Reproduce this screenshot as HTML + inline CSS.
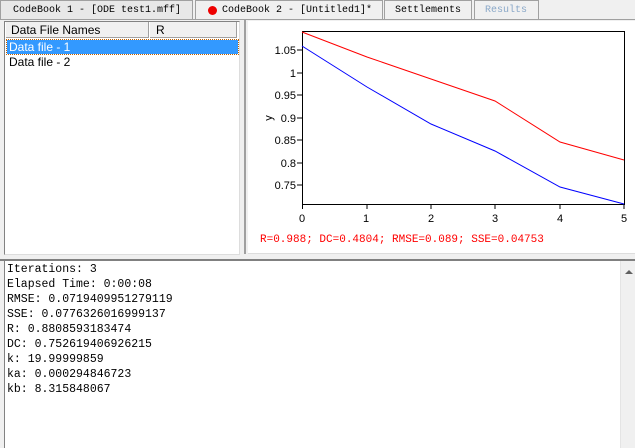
<!DOCTYPE html><html><head><style>
body{margin:0;width:635px;height:448px;background:#f0f0f0;position:relative;overflow:hidden;font-family:"Liberation Sans",sans-serif}
.a{position:absolute}
.tab{position:absolute;top:0;height:19px;border:1px solid #a0a0a0;border-bottom:none;background:#f0f0f0;font:10px "Liberation Mono",monospace;line-height:19px;white-space:nowrap;box-sizing:border-box}
.m{font:11.5px "Liberation Mono",monospace;line-height:15px;white-space:pre}
</style></head><body>
<div class="a" style="left:0;top:19px;width:635px;height:1px;background:#a0a0a0"></div>
<div class="tab" style="left:0;width:193px;background:#e8e8e8;padding-left:12px">CodeBook 1 - [ODE test1.mff]</div>
<div class="tab" style="left:195px;width:188px;padding-left:26px"><span style="position:absolute;left:12px;top:5px;width:9px;height:9px;border-radius:50%;background:#e00"></span>CodeBook 2 - [Untitled1]*</div>
<div class="tab" style="left:384px;width:88px;padding-left:10px">Settlements</div>
<div class="tab" style="left:474px;width:65px;color:#8aa8c8;padding-left:10px">Results</div>
<!-- left panel -->
<div class="a" style="left:4px;top:21px;width:234px;height:232px;background:#fff;border:1px solid #828282;border-right-color:#ddd;border-bottom-color:#ddd"></div>
<div class="a" style="left:6px;top:22px;width:143px;height:16px;background:#f0f0f0;border-right:1px solid #a0a0a0;border-bottom:1px solid #a0a0a0;font-size:12px;line-height:16px;padding-left:5px;box-sizing:border-box">Data File Names</div>
<div class="a" style="left:150px;top:22px;width:87px;height:16px;background:#f0f0f0;border-right:1px solid #a0a0a0;border-bottom:1px solid #a0a0a0;font-size:12px;line-height:16px;padding-left:6px;box-sizing:border-box">R</div>
<div class="a" style="left:7px;top:40px;width:231px;height:14px;background:#3399ff;color:#fff;font-size:12px;line-height:14px;padding-left:2px;box-sizing:border-box;outline:1px dotted #c06000">Data file - 1</div>
<div class="a" style="left:9px;top:55px;font-size:12px;line-height:14px">Data file - 2</div>
<!-- right panel -->
<div class="a" style="left:244px;top:20px;width:391px;height:234px;border-left:2px solid #a0a0a0;box-sizing:border-box"></div>
<div class="a" style="left:248px;top:21px;width:387px;height:232px;background:#fff;border-bottom:1px solid #ddd"></div>
<svg class="a" style="left:0;top:0" width="635" height="260" font-family="Liberation Sans,sans-serif" font-size="11">
<rect x="302.5" y="31.5" width="322" height="173" fill="none" stroke="#000"/>
<g stroke="#000">
<line x1="297" y1="50" x2="302" y2="50"/><line x1="297" y1="73" x2="302" y2="73"/><line x1="297" y1="95" x2="302" y2="95"/><line x1="297" y1="118" x2="302" y2="118"/><line x1="297" y1="140" x2="302" y2="140"/><line x1="297" y1="163" x2="302" y2="163"/><line x1="297" y1="185" x2="302" y2="185"/>
<line x1="302.5" y1="205" x2="302.5" y2="209"/><line x1="367" y1="205" x2="367" y2="209"/><line x1="431" y1="205" x2="431" y2="209"/><line x1="495" y1="205" x2="495" y2="209"/><line x1="560" y1="205" x2="560" y2="209"/><line x1="624" y1="205" x2="624" y2="209"/>
</g>
<g text-anchor="end"><text x="296" y="54">1.05</text><text x="296" y="77">1</text><text x="296" y="99">0.95</text><text x="296" y="122">0.9</text><text x="296" y="144">0.85</text><text x="296" y="167">0.8</text><text x="296" y="189">0.75</text></g>
<g text-anchor="middle"><text x="302" y="222">0</text><text x="366" y="222">1</text><text x="431" y="222">2</text><text x="495" y="222">3</text><text x="560" y="222">4</text><text x="624" y="222">5</text></g>
<text x="268" y="122" transform="rotate(-90 268 118)" text-anchor="middle">y</text>
<polyline fill="none" stroke="#f00" points="302,32 367,57 431,79 495,101 560,142 624,160"/>
<polyline fill="none" stroke="#00f" points="302,46 367,87 431,124 495,151 560,187 624,204"/>
<text x="260" y="242" fill="#f00" font-family="Liberation Mono,monospace" font-size="11">R=0.988; DC=0.4804; RMSE=0.089; SSE=0.04753</text>
</svg>
<!-- bottom -->
<div class="a" style="left:0;top:259px;width:635px;height:2px;background:#808080"></div>
<div class="a" style="left:4px;top:261px;width:616px;height:187px;background:#fff;border-left:1px solid #828282"></div>
<div class="a" style="left:620px;top:261px;width:15px;height:187px;background:#f0f0f0;border-left:1px solid #e4e4e4;box-sizing:border-box"></div>
<div class="a" style="left:625px;top:270px;width:0;height:0;border-left:4px solid transparent;border-right:4px solid transparent;border-bottom:4px solid #606060"></div>
<div class="a m" style="left:7px;top:262px">Iterations: 3
Elapsed Time: 0:00:08
RMSE: 0.0719409951279119
SSE: 0.0776326016999137
R: 0.8808593183474
DC: 0.752619406926215
k: 19.99999859
ka: 0.000294846723
kb: 8.315848067</div>
</body></html>
